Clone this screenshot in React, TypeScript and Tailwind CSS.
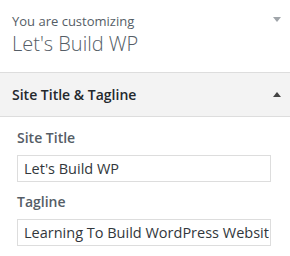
export default function App() {
  return (
    <div className="w-[290px] h-[256px] bg-white overflow-hidden font-['Open_Sans',sans-serif]">
      {/* customizer heading */}
      <div className="relative h-[73px] border-b border-[#dddddd] pl-[12px] pt-[12px]">
        <div className="text-[13px] leading-[18px] text-[#555d66]">You are customizing</div>
        <div className="text-[20px] leading-[28px] font-light text-[#555d66]">Let's Build WP</div>
        <span className="absolute right-[9px] top-[17px] w-0 h-0 border-l-[4px] border-r-[4px] border-t-[5px] border-l-transparent border-r-transparent border-t-[#a0a5aa]" />
      </div>

      {/* section title */}
      <div className="relative h-[44px] bg-[#f3f3f3] border-b border-[#dddddd] pl-[12px] flex items-center">
        <span className="text-[14px] font-semibold text-[#23282d] leading-[20px]">Site Title &amp; Tagline</span>
        <span className="absolute right-[9px] top-[19px] w-0 h-0 border-l-[4px] border-r-[4px] border-b-[5px] border-l-transparent border-r-transparent border-b-[#444444]" />
      </div>

      {/* controls */}
      <div className="pl-[17px] pr-[19px] pt-[11px] flex flex-col">
        <label className="text-[14px] font-semibold text-[#555d66] leading-[20px]">Site Title</label>
        <input
          readOnly
          value="Let's Build WP"
          className="mt-[7px] h-[27px] w-full border border-[#dddddd] bg-white pl-[6px] pr-[1px] text-[14.5px] text-[#32373c] outline-none"
        />
        <label className="mt-[10px] text-[14px] font-semibold text-[#555d66] leading-[20px]">Tagline</label>
        <input
          readOnly
          value="Learning To Build WordPress Website"
          className="mt-[7px] h-[27px] w-full border border-[#dddddd] bg-white pl-[6px] pr-[1px] text-[14.5px] text-[#32373c] outline-none"
        />
      </div>
    </div>
  );
}
